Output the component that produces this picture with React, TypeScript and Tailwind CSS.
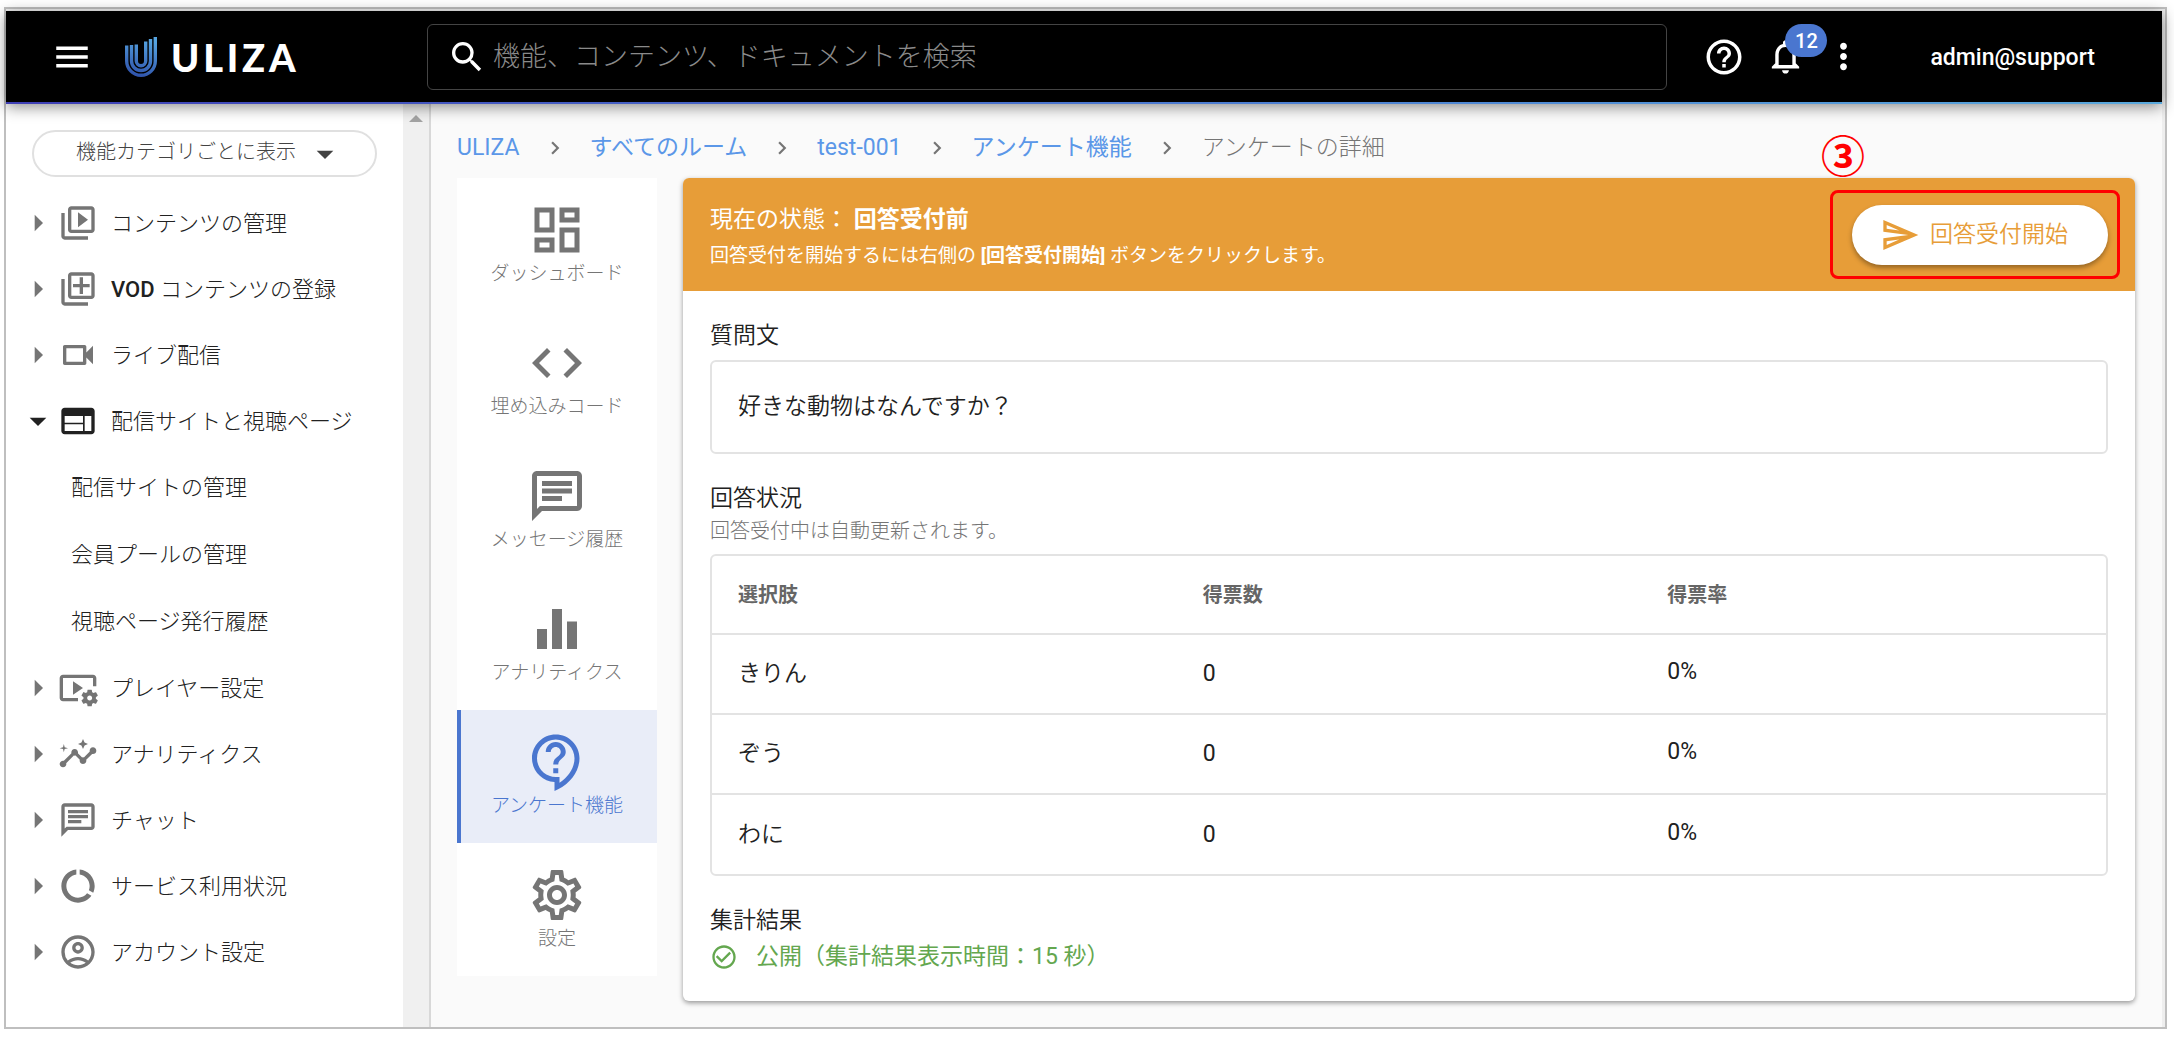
import type { ReactNode } from "react";
import type { IconType } from "react-icons";
import {
  MdArrowDropDown,
  MdArrowRight,
  MdCheckCircleOutline,
  MdChevronRight,
  MdCode,
  MdDataUsage,
  MdEqualizer,
  MdHelpOutline,
  MdInsights,
  MdMenu,
  MdMoreVert,
  MdOutlineAccountCircle,
  MdOutlineAddToPhotos,
  MdOutlineChat,
  MdOutlineContactSupport,
  MdOutlineDashboard,
  MdOutlineNotifications,
  MdOutlineSend,
  MdOutlineSettings,
  MdOutlineVideoLibrary,
  MdOutlineVideoSettings,
  MdOutlineVideocam,
  MdSearch,
  MdWeb,
} from "react-icons/md";

type MenuItem = {
  label: ReactNode;
  key: string;
  icon: IconType;
  children?: string[];
};

const menuItems: MenuItem[] = [
  { key: "contents", label: "コンテンツの管理", icon: MdOutlineVideoLibrary },
  {
    key: "vod",
    label: (
      <>
        <span className="font-medium">VOD</span> コンテンツの登録
      </>
    ),
    icon: MdOutlineAddToPhotos,
  },
  { key: "live", label: "ライブ配信", icon: MdOutlineVideocam },
  {
    key: "site",
    label: "配信サイトと視聴ページ",
    icon: MdWeb,
    children: ["配信サイトの管理", "会員プールの管理", "視聴ページ発行履歴"],
  },
  { key: "player", label: "プレイヤー設定", icon: MdOutlineVideoSettings },
  { key: "analytics", label: "アナリティクス", icon: MdInsights },
  { key: "chat", label: "チャット", icon: MdOutlineChat },
  { key: "usage", label: "サービス利用状況", icon: MdDataUsage },
  { key: "account", label: "アカウント設定", icon: MdOutlineAccountCircle },
];

const breadcrumbs = ["ULIZA", "すべてのルーム", "test-001", "アンケート機能"];

const roomTabs: { label: string; icon: IconType; active?: boolean }[] = [
  { label: "ダッシュボード", icon: MdOutlineDashboard },
  { label: "埋め込みコード", icon: MdCode },
  { label: "メッセージ履歴", icon: MdOutlineChat },
  { label: "アナリティクス", icon: MdEqualizer },
  { label: "アンケート機能", icon: MdOutlineContactSupport, active: true },
  { label: "設定", icon: MdOutlineSettings },
];

const results = [
  { choice: "きりん", votes: 0, rate: "0%" },
  { choice: "ぞう", votes: 0, rate: "0%" },
  { choice: "わに", votes: 0, rate: "0%" },
];

export default function App() {
  return (
    <div className="flex min-h-screen bg-white pt-[7px] pr-[7px] pb-[9px] pl-1 font-[Roboto,'Noto_Sans_CJK_JP',sans-serif] text-[#212121]">
      <div className="flex flex-1 flex-col border-2 border-[#bfbfbf] bg-[#eeeeee] pt-0.5 pr-[3px]">
        <Header />
        <div className="flex flex-1">
          <Sidebar />
          <main className="min-w-0 flex-1 bg-[#fafafa] pt-7 pr-[27px] pb-6 pl-[26px]">
            <Breadcrumbs />
            <div className="mt-[14px] flex items-start gap-[26px]">
              <RoomTabs />
              <SurveyCard />
            </div>
          </main>
        </div>
      </div>
    </div>
  );
}

function Header() {
  return (
    <header className="relative z-10 bg-black text-white shadow-[0_3px_14px_rgba(0,0,0,0.45)]">
      <div className="flex h-[91px] items-center pr-[67px] pl-[45px]">
        <button type="button" aria-label="メニュー">
          <MdMenu className="size-[42px]" />
        </button>
        <a href="#" className="ml-8 flex w-[302px] items-center gap-[14px]">
          <LogoMark />
          <span className="font-[Lato,sans-serif] text-[38px] leading-10 font-black tracking-widest">
            ULIZA
          </span>
        </a>
        <div className="flex h-[66px] flex-1 items-center gap-1.5 rounded-md border border-[#444444] pl-[19px]">
          <MdSearch className="size-10 shrink-0" />
          <input
            type="search"
            aria-label="検索"
            placeholder="機能、コンテンツ、ドキュメントを検索"
            className="h-full min-w-0 flex-1 bg-transparent text-[27px] font-light outline-none placeholder:text-[#8a8a8a]"
          />
        </div>
        <button type="button" aria-label="ヘルプ" className="ml-9">
          <MdHelpOutline className="size-[42px]" />
        </button>
        <button type="button" aria-label="通知" className="relative ml-5">
          <MdOutlineNotifications className="size-[41px]" />
          <span className="absolute -top-3 left-5 flex h-[33px] w-[42px] items-center justify-center rounded-full bg-[#4a76cf] text-xl font-medium">
            12
          </span>
        </button>
        <button type="button" aria-label="その他" className="ml-[17px]">
          <MdMoreVert className="size-[41px]" />
        </button>
        <span className="ml-[66px] pt-1 text-[23px] font-medium">admin@support</span>
      </div>
      <div className="h-0.5 bg-linear-to-r from-[#3f3fb5] via-[#4a76cf] to-[#5aa9dc]" />
    </header>
  );
}

function LogoMark() {
  return (
    <svg viewBox="0 0 32 40" className="h-10 w-8" fill="none" aria-hidden="true">
      <defs>
        <linearGradient id="logo" x1="0" y1="40" x2="12" y2="0" gradientUnits="userSpaceOnUse">
          <stop offset="0" stopColor="#2b4aa5" />
          <stop offset="1" stopColor="#55a3e0" />
        </linearGradient>
      </defs>
      <g stroke="url(#logo)" strokeWidth="3.4">
        <path d="M1.700 8.500v15.500a14.300 14.300 0 0 0 28.600 0V0" />
        <path d="M6.500 8v16a9.500 9.500 0 0 0 19 0V2" />
        <path d="M11.300 7.500v16.500a4.700 4.700 0 0 0 9.400 0V4.500" />
      </g>
    </svg>
  );
}

function Sidebar() {
  return (
    <aside className="flex w-[425px] shrink-0 border-r-2 border-[#d8d8d8] bg-white">
      <div className="flex-1">
        <div className="relative mx-[26px] mt-[26px]">
          <select
            aria-label="表示方法"
            className="h-[47px] w-full appearance-none rounded-full border-2 border-[#e0e0e0] bg-white pb-[3px] pl-[42px] text-xl font-light text-[#424242]"
          >
            <option>機能カテゴリごとに表示</option>
          </select>
          <MdArrowDropDown className="pointer-events-none absolute top-1 right-8 size-10 text-[#424242]" />
        </div>
        <nav className="mt-[13px] text-[22px] font-light">
          <ul>
            {menuItems.map((item) => (
              <li key={item.key}>
                <SidebarLink item={item} />
                {item.children && (
                  <ul>
                    {item.children.map((child) => (
                      <li key={child}>
                        <a href="#" className="flex h-[67px] items-center pl-[65px]">
                          {child}
                        </a>
                      </li>
                    ))}
                  </ul>
                )}
              </li>
            ))}
          </ul>
        </nav>
      </div>
      <div className="flex w-[26px] justify-center bg-[#f0f0f0] pt-[11px]">
        <svg viewBox="0 0 14 7" className="h-[7px] w-[14px]" aria-hidden="true">
          <path d="M7 0l7 7H0z" fill="#a3a3a3" />
        </svg>
      </div>
    </aside>
  );
}

function SidebarLink({ item }: { item: MenuItem }) {
  const Icon = item.icon;
  const Caret = item.children ? MdArrowDropDown : MdArrowRight;
  const tone = item.children ? "text-[#212121]" : "text-[#757575]";
  return (
    <a href="#" className="flex h-[66px] items-center pl-3">
      <Caret className={`size-10 shrink-0 ${tone}`} />
      <Icon className={`size-10 shrink-0 ${tone}`} />
      <span className="ml-[13px] whitespace-nowrap">{item.label}</span>
    </a>
  );
}

function Breadcrumbs() {
  return (
    <nav aria-label="パンくずリスト">
      <ol className="flex h-8 items-center gap-[22px] text-[23px] whitespace-nowrap">
        {breadcrumbs.map((crumb) => (
          <li key={crumb} className="flex items-center gap-[22px]">
            <a href="#" className="text-[#5b97e8]">
              {crumb}
            </a>
            <MdChevronRight className="size-[26px] text-[#757575]" />
          </li>
        ))}
        <li className="font-light text-[#757575]">アンケートの詳細</li>
      </ol>
    </nav>
  );
}

function RoomTabs() {
  return (
    <nav className="w-[200px] shrink-0 bg-white">
      {roomTabs.map(({ label, icon: Icon, active }) => (
        <a
          key={label}
          href="#"
          className={`flex h-[133px] flex-col items-center border-l-4 pt-[22px] pr-1 text-[19px] leading-7 ${
            active
              ? "border-[#4a76cf] bg-[#e9edf8] text-[#4a76cf]"
              : "border-transparent text-[#757575]"
          }`}
        >
          <Icon className="size-[60px]" />
          <span className="font-light">{label}</span>
        </a>
      ))}
    </nav>
  );
}

function SurveyCard() {
  return (
    <section className="min-w-0 flex-1 rounded-md bg-white text-[23px] leading-8 font-[350] shadow-[0_2px_5px_rgba(0,0,0,0.4)]">
      <div className="relative flex h-[113px] items-center justify-between rounded-t-md bg-[#e79d38] px-[27px] text-white">
        <div className="pt-1.5 font-normal">
          <p>
            現在の状態： <strong>回答受付前</strong>
          </p>
          <p className="mt-1 text-[19px]">
            回答受付を開始するには右側の <strong>[回答受付開始]</strong> ボタンをクリックします。
          </p>
        </div>
        <button
          type="button"
          className="flex h-[60px] items-center gap-2.5 rounded-full bg-white pr-10 pl-7 text-[#e79d38] shadow-[0_3px_5px_rgba(0,0,0,0.35)]"
        >
          <MdOutlineSend className="size-10" />
          回答受付開始
        </button>
        <div className="pointer-events-none absolute top-3 right-[15px] h-[89px] w-[290px] rounded-lg border-3 border-[#ff0000]" />
        <span className="absolute -top-[42px] right-[270px] text-[44px] leading-[44px] font-bold text-[#ff0000]">
          ③
        </span>
      </div>

      <div className="px-[27px] pt-[29px] pb-7">
        <h2>質問文</h2>
        <p className="mt-2 flex h-[94px] items-center rounded-md border-2 border-[#e3e3e3] px-[26px]">
          好きな動物はなんですか？
        </p>

        <h2 className="mt-[29px]">回答状況</h2>
        <p className="text-xl leading-8 font-light text-[#757575]">回答受付中は自動更新されます。</p>
        <div className="mt-[7px] rounded-md border-2 border-[#e3e3e3]">
          <table className="w-full table-fixed text-left">
            <thead className="text-xl text-[#666666]">
              <tr className="h-[78px]">
                <th className="pl-[26px] font-bold">選択肢</th>
                <th className="pl-[26px] font-bold">得票数</th>
                <th className="pl-[26px] font-bold">得票率</th>
              </tr>
            </thead>
            <tbody>
              {results.map((row) => (
                <tr key={row.choice} className="h-20 border-t-2 border-[#e3e3e3]">
                  <td className="pl-[26px]">{row.choice}</td>
                  <td className="pl-[26px] font-normal">{row.votes}</td>
                  <td className="pb-1 pl-[26px] font-normal">{row.rate}</td>
                </tr>
              ))}
            </tbody>
          </table>
        </div>

        <h2 className="mt-[29px]">集計結果</h2>
        <p className="mt-1 flex items-center gap-[18px] font-normal text-[#64a74f]">
          <MdCheckCircleOutline className="size-7" />
          公開（集計結果表示時間：15 秒）
        </p>
      </div>
    </section>
  );
}
